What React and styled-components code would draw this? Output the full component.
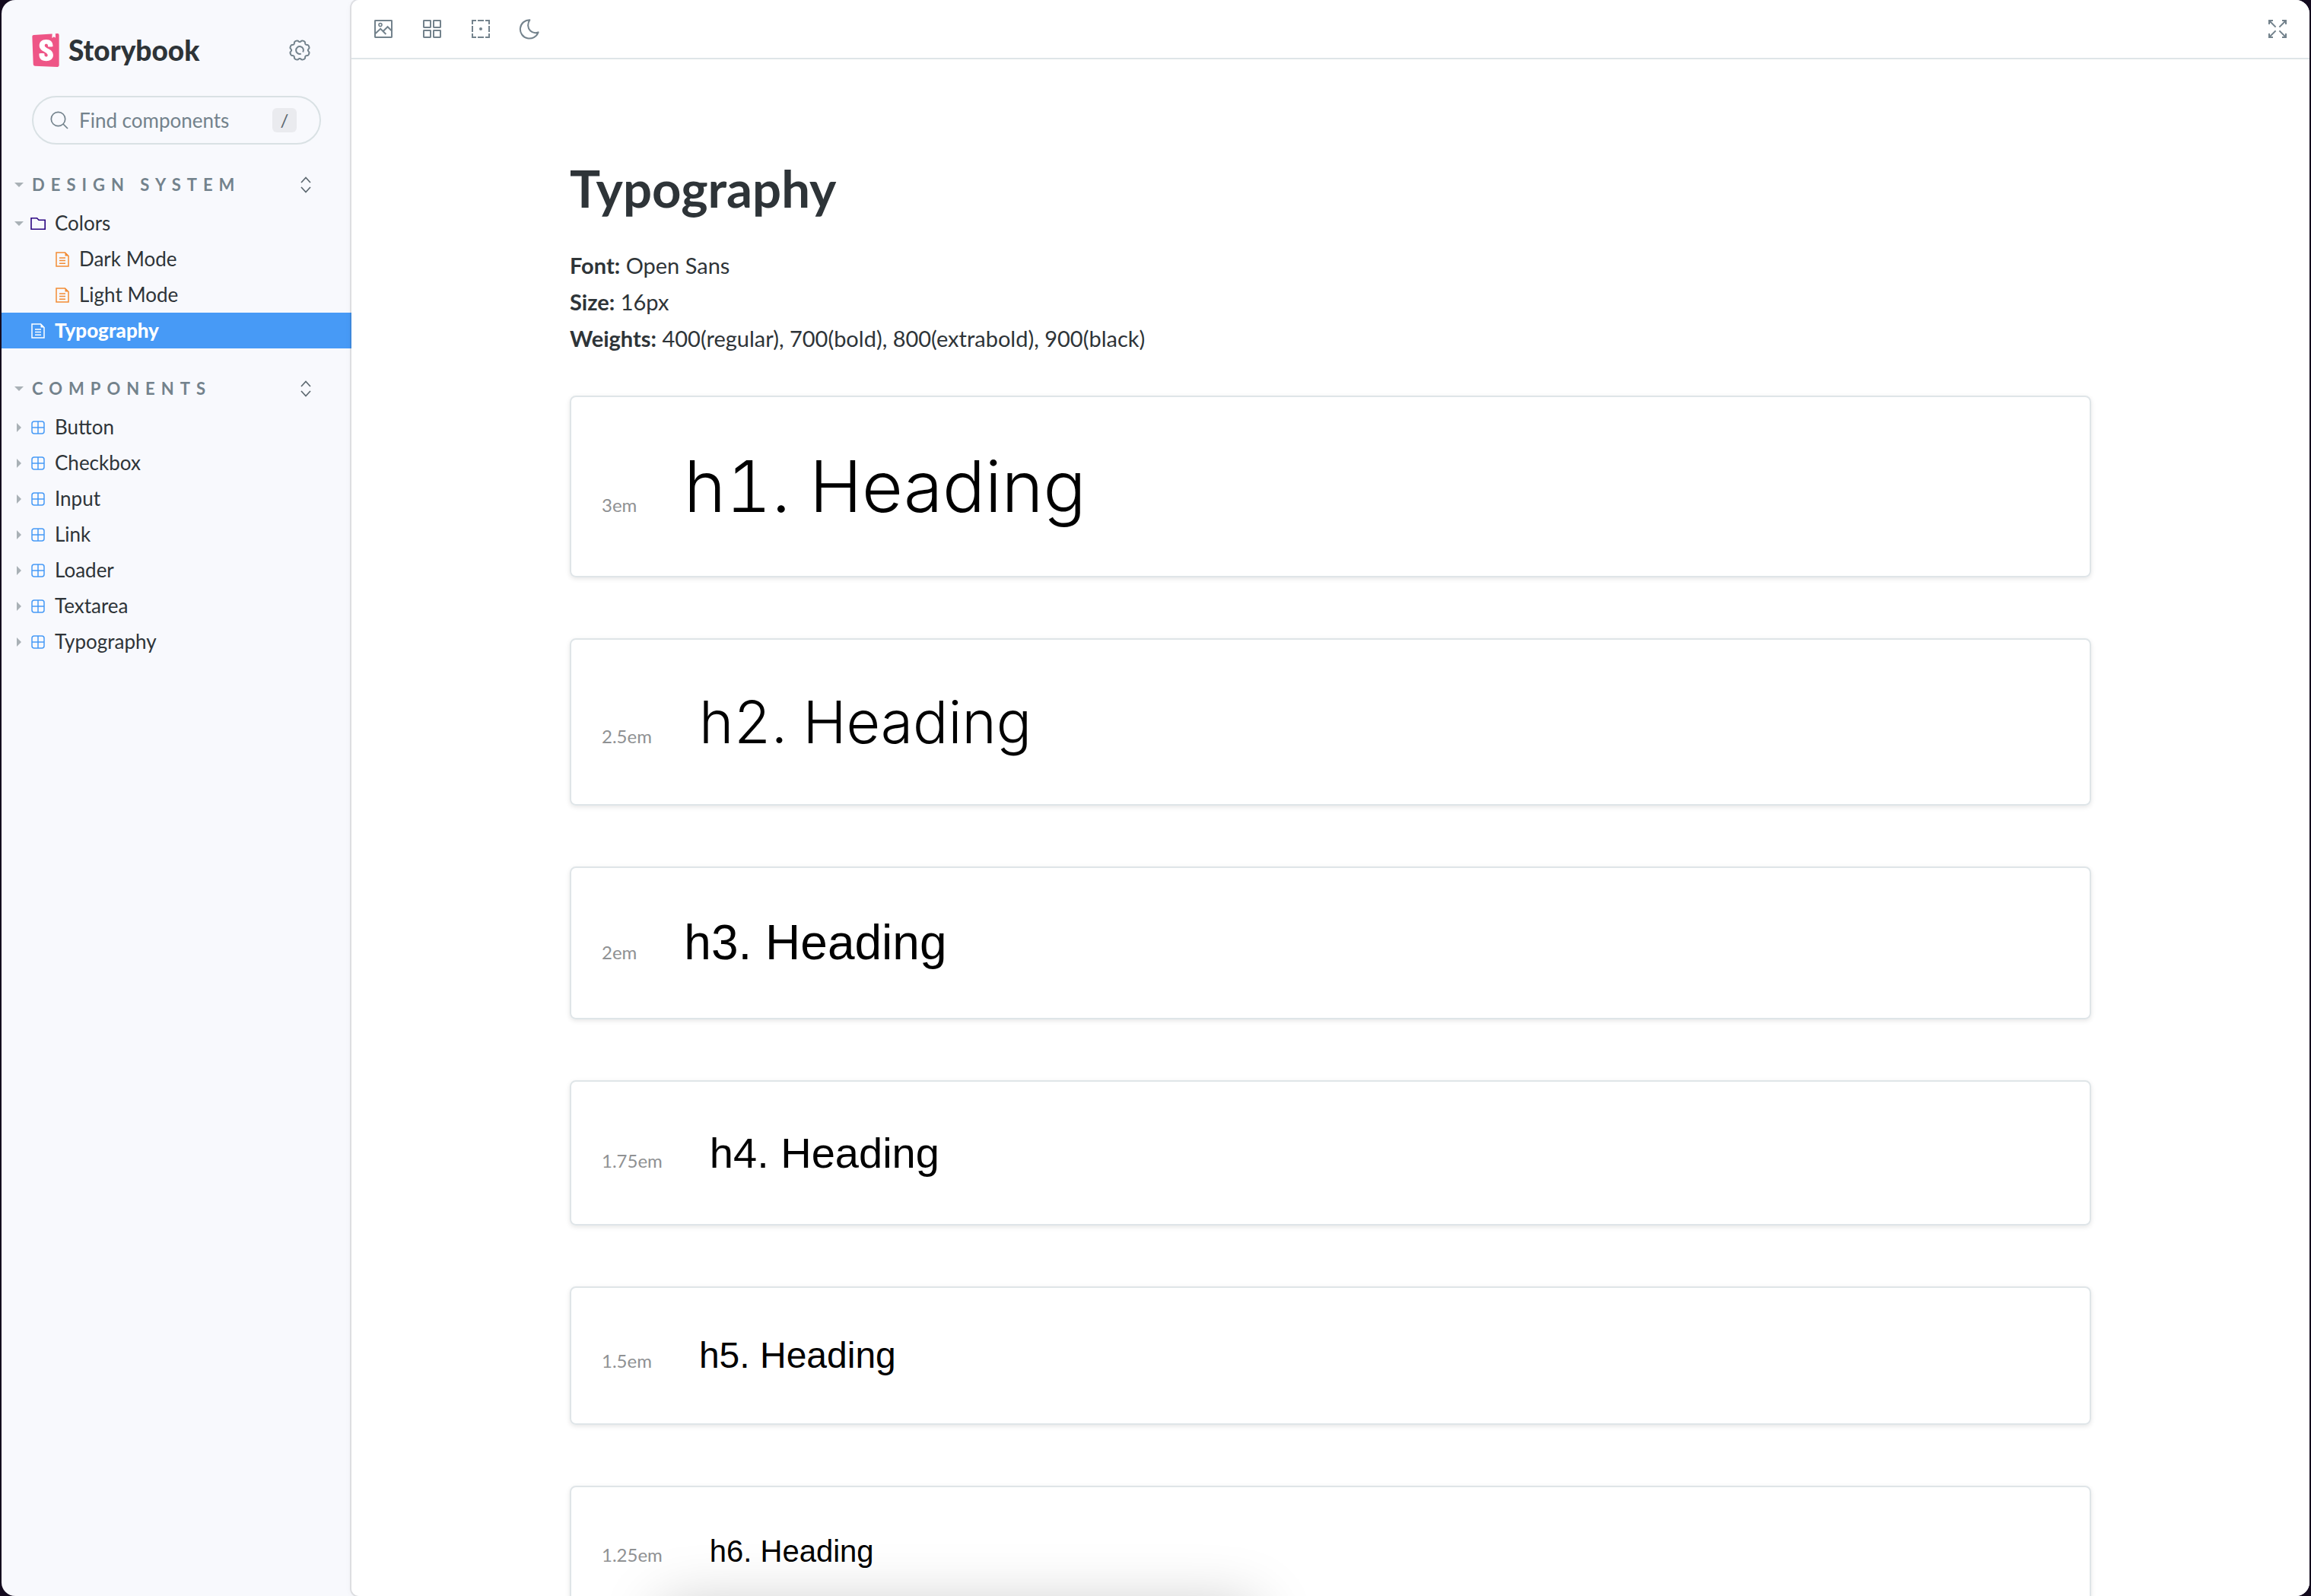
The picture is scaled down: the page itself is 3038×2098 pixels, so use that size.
import React from 'react';
import styled, { createGlobalStyle } from 'styled-components';
import { SiStorybook } from 'react-icons/si';

const color = {
  ink: '#2e3438',
  muted: '#73828c',
  border: '#dfe5e8',
  inputBorder: '#d9e1e4',
  sidebar: '#f8f9fd',
  blue: '#479af6',
  orange: '#f28c35',
  violet: '#2a0481',
  pink: '#ee5586',
};

const GlobalStyle = createGlobalStyle`
  *, *::before, *::after { box-sizing: border-box; }
  body {
    margin: 0;
    background: #130a1e;
    font-family: Lato, "Noto Sans", sans-serif;
    color: ${color.ink};
  }
  button {
    font: inherit;
    color: inherit;
    background: none;
    border: 0;
    padding: 0;
    cursor: pointer;
  }
  svg { display: block; }
`;

const Frame = styled.div`
  height: 100vh;
  padding: 0 2px;
`;

const Shell = styled.div`
  display: grid;
  grid-template-columns: 460px minmax(0, 1fr);
  height: 100%;
  border-radius: 18px;
  overflow: hidden;
  background: ${color.sidebar};
`;

const Sidebar = styled.nav`
  display: flex;
  flex-direction: column;
  gap: 26px;
  padding-top: 40px;
`;

const SidebarTop = styled.div`
  display: flex;
  flex-direction: column;
  gap: 34px;
  padding: 0 40px;
`;

const BrandRow = styled.div`
  display: flex;
  align-items: center;
  justify-content: space-between;
  height: 52px;
  padding-right: 14px;
`;

const Brand = styled.a`
  display: flex;
  align-items: center;
  gap: 12px;
  color: ${color.ink};
  font-size: 37px;
  line-height: 44px;
  font-weight: 900;
  text-decoration: none;
`;

const BrandMark = styled(SiStorybook)`
  width: 36px;
  height: 44px;
  color: ${color.pink};
  background: linear-gradient(#fff, #fff) center / 64% 90% no-repeat;
`;

const IconButton = styled.button`
  display: grid;
  place-items: center;
  width: 28px;
  height: 28px;
  color: ${color.muted};
`;

const SearchBox = styled.label`
  display: flex;
  align-items: center;
  gap: 14px;
  height: 64px;
  padding: 0 30px 0 22px;
  border: 2px solid ${color.inputBorder};
  border-radius: 32px;
  color: ${color.muted};
`;

const SearchInput = styled.input`
  flex: 1;
  min-width: 0;
  padding: 0;
  border: 0;
  outline: 0;
  background: none;
  font-family: inherit;
  font-size: 26px;
  line-height: 32px;
  color: ${color.ink};
  &::placeholder { color: ${color.muted}; opacity: 1; }
`;

const Key = styled.kbd`
  display: grid;
  place-items: center;
  width: 32px;
  height: 32px;
  border-radius: 6px;
  background: #eaebef;
  color: #5c6870;
  font-family: inherit;
  font-size: 24px;
  line-height: 32px;
`;

const SectionHeader = styled.div`
  display: flex;
  align-items: center;
  justify-content: space-between;
  height: 54px;
  padding: 0 46px 0 17px;
`;

const SectionTitle = styled.button`
  display: flex;
  align-items: center;
  gap: 11px;
  color: ${color.muted};
  font-size: 22px;
  line-height: 28px;
  font-weight: 700;
  letter-spacing: 8px;
  text-transform: uppercase;
`;

const TreeList = styled.ul`
  margin: 0;
  padding: 0;
  list-style: none;
`;

const TreeLink = styled.a`
  display: flex;
  align-items: center;
  height: 47px;
  padding-left: ${(p) => 17 + p.$depth * 32}px;
  background: ${(p) => (p.$selected ? color.blue : 'transparent')};
  color: ${(p) => (p.$selected ? '#fff' : color.ink)};
  font-size: 26px;
  line-height: 32px;
  font-weight: ${(p) => (p.$selected ? 900 : 400)};
  text-decoration: none;
`;

const ItemName = styled.span`
  padding-bottom: 2px;
`;

const CaretCell = styled.span`
  display: grid;
  place-items: center;
  width: 12px;
  height: 12px;
`;

const KindCell = styled.span`
  display: grid;
  place-items: center;
  width: 28px;
  margin: 0 8px 0 5px;
  color: ${(p) => p.$tint};
`;

const Main = styled.main`
  position: relative;
  display: flex;
  flex-direction: column;
  min-height: 0;
  overflow: hidden;
  background: #fff;
  border-radius: 10px 0 0 10px;
`;

const MainWrap = styled.div`
  display: grid;
  min-height: 0;
  border-radius: 10px 0 0 10px;
  box-shadow: 0 0 0 2px rgba(0, 0, 0, 0.09), 0 2px 10px rgba(0, 0, 0, 0.06);
`;

const Toolbar = styled.header`
  display: flex;
  flex: none;
  align-items: center;
  justify-content: space-between;
  height: 78px;
  padding: 0 28px;
  border-bottom: 2px solid ${color.border};
`;

const ToolGroup = styled.div`
  display: flex;
  gap: 36px;
`;

const DocsScroll = styled.div`
  flex: 1;
  min-height: 0;
  padding: 129px 40px;
  overflow: hidden;
`;

const Docs = styled.article`
  max-width: 2000px;
  margin: 0 auto;
`;

const Title = styled.h1`
  margin: 0 0 38px;
  font-size: 67px;
  line-height: 80px;
  font-weight: 700;
`;

const Facts = styled.div`
  margin-bottom: 51px;
  font-size: 29px;
  line-height: 48px;
`;

const Fact = styled.p`
  margin: 0;
`;

const Specimens = styled.div`
  display: flex;
  flex-direction: column;
  gap: 80px;
`;

const Specimen = styled.section`
  display: flex;
  align-items: baseline;
  gap: 62px;
  padding: 60px 40px;
  border: 2px solid ${color.border};
  border-radius: 8px;
  box-shadow: 0 2px 6px rgba(0, 0, 0, 0.1);
`;

const SizeLabel = styled.span`
  font-size: 24px;
  line-height: 32px;
  color: #8f9193;
`;

const Sample = styled.div`
  font-family: ${(p) => (p.$light ? 'Inter, sans-serif' : '"Liberation Sans", Arial, sans-serif')};
  font-size: ${(p) => p.$size}px;
  line-height: ${(p) => p.$line}px;
  font-weight: ${(p) => (p.$light ? 300 : 400)};
  font-variant-numeric: tabular-nums;
  color: #000;
  white-space: nowrap;
`;

const DockShade = styled.div`
  position: absolute;
  left: 408px;
  bottom: -112px;
  width: 780px;
  height: 100px;
  box-shadow: 0 0 80px rgba(0, 0, 0, 0.22);
  pointer-events: none;
`;

function Stroke({ children }) {
  return (
    <svg width="28" height="28" viewBox="0 0 14 14" fill="none" stroke="currentColor" aria-hidden="true">
      {children}
    </svg>
  );
}

const gearPath = (() => {
  const steps = 96;
  const pts = [];
  for (let i = 0; i < steps; i += 1) {
    const t = (i / steps) * Math.PI * 2;
    const wave = Math.tanh(1.6 * (0.45 - Math.cos(8 * t)));
    const r = 5.9 + 0.65 * wave;
    pts.push(`${(7 + r * Math.sin(t)).toFixed(2)} ${(7 - r * Math.cos(t)).toFixed(2)}`);
  }
  return `M${pts.join('L')}Z`;
})();

const GearIcon = () => (
  <Stroke>
    <path d={gearPath} strokeLinejoin="round" />
    <path d="M7.9 9.3A2.45 2.45 0 1 1 9.1 8.3" />
  </Stroke>
);

const PhotoIcon = () => (
  <Stroke>
    <rect x="1.5" y="1.5" width="11" height="11" rx="0.2" />
    <circle cx="5" cy="4.3" r="1" strokeWidth="0.8" />
    <path d="M1.5 10.3 5.1 6.9 8.7 10.5M7 8.4 9.8 5.6 12.6 8.4" />
  </Stroke>
);

const GridIcon = () => (
  <Stroke>
    <rect x="1.5" y="1.5" width="4.5" height="4.5" rx="0.2" />
    <rect x="8" y="1.5" width="4.5" height="4.5" rx="0.2" />
    <rect x="1.5" y="8" width="4.5" height="4.5" rx="0.2" />
    <rect x="8" y="8" width="4.5" height="4.5" rx="0.2" />
  </Stroke>
);

const OutlineIcon = () => (
  <Stroke>
    <path d="M1.5 4V1.5H4M5 1.5H9M10 1.5H12.5V4M12.5 5V9M12.5 10V12.5H10M9 12.5H5M4 12.5H1.5V10M1.5 9V5" />
    <circle cx="7" cy="7" r="1" fill="currentColor" stroke="none" />
  </Stroke>
);

const MoonIcon = () => (
  <Stroke>
    <path d="M7.2 1.1C5.6 3.4 5.7 6.5 7.6 8.3C9 9.6 11 9.9 12.8 9.2A6.1 6.1 0 1 1 7.2 1.1Z" strokeLinejoin="round" />
  </Stroke>
);

const FullscreenIcon = () => (
  <Stroke>
    <path d="M1.5 4V1.5H4M1.5 1.5 5.8 5.8M10 1.5H12.5V4M12.5 1.5 8.2 5.8M1.5 10V12.5H4M1.5 12.5 5.8 8.2M10 12.5H12.5V10M12.5 12.5 8.2 8.2" />
  </Stroke>
);

const SearchIcon = () => (
  <svg width="24" height="24" viewBox="0 0 24 24" fill="none" stroke="currentColor" strokeWidth="1.7" aria-hidden="true">
    <circle cx="10.5" cy="10.5" r="9.2" />
    <path d="M17 17 23 23" />
  </svg>
);

const ExpandIcon = () => (
  <svg width="28" height="28" viewBox="0 0 28 28" fill="none" stroke="#5c6870" strokeWidth="1.7" aria-hidden="true">
    <path d="M8 11 14 4.5 20 11M8 17 14 23.5 20 17" />
  </svg>
);

const Caret = ({ open }) => (
  <svg width="12" height="12" viewBox="0 0 12 12" fill="#a9b1b6" aria-hidden="true">
    <path d={open ? 'M0 3H12L6 9Z' : 'M3 0V12L9 6Z'} />
  </svg>
);

const FolderIcon = () => (
  <svg width="20" height="20" viewBox="0 0 20 20" fill="none" stroke="currentColor" strokeWidth="1.6" aria-hidden="true">
    <path d="M1 2.8H8.6L11 5.2H19.2V17.2H1Z" />
  </svg>
);

const DocIcon = () => (
  <svg width="18" height="20" viewBox="0 0 18 20" fill="none" stroke="currentColor" strokeWidth="1.5" aria-hidden="true">
    <path d="M1 1H12.5L17 5.5V19H1Z" />
    <path d="M12.5 0.5V5.5H17.5Z" fill="currentColor" stroke="none" />
    <path d="M5 8H13M5 11.5H13M5 15.3H13" />
  </svg>
);

const ComponentIcon = () => (
  <svg width="18" height="18" viewBox="0 0 18 18" fill="none" stroke="currentColor" strokeWidth="1.5" aria-hidden="true">
    <rect x="1" y="1" width="16" height="16" rx="3" />
    <path d="M9 1V17M1 9H17" />
  </svg>
);

const kinds = {
  group: { Icon: FolderIcon, tint: color.violet },
  doc: { Icon: DocIcon, tint: color.orange },
  component: { Icon: ComponentIcon, tint: color.blue },
};

const sections = [
  {
    title: 'Design System',
    items: [
      { name: 'Colors', kind: 'group', caret: 'open' },
      { name: 'Dark Mode', kind: 'doc', depth: 1 },
      { name: 'Light Mode', kind: 'doc', depth: 1 },
      { name: 'Typography', kind: 'doc', selected: true },
    ],
  },
  {
    title: 'Components',
    items: ['Button', 'Checkbox', 'Input', 'Link', 'Loader', 'Textarea', 'Typography'].map((name) => ({
      name,
      kind: 'component',
      caret: 'closed',
    })),
  },
];

const facts = [
  ['Font:', 'Open Sans'],
  ['Size:', '16px'],
  ['Weights:', '400(regular), 700(bold), 800(extrabold), 900(black)'],
];

const specimens = [
  { label: '3em', text: 'h1. Heading', size: 93, line: 115, light: true },
  { label: '2.5em', text: 'h2. Heading', size: 77, line: 96, light: true },
  { label: '2em', text: 'h3. Heading', size: 64, line: 77 },
  { label: '1.75em', text: 'h4. Heading', size: 56, line: 67 },
  { label: '1.5em', text: 'h5. Heading', size: 48, line: 58 },
  { label: '1.25em', text: 'h6. Heading', size: 40, line: 48 },
];

const tools = [
  ['Change background', PhotoIcon],
  ['Apply grid', GridIcon],
  ['Apply outline', OutlineIcon],
  ['Toggle dark mode', MoonIcon],
];

function TreeItem({ item }) {
  const { Icon, tint } = kinds[item.kind];
  return (
    <li>
      <TreeLink
        href="#"
        $depth={item.depth || 0}
        $selected={item.selected}
        aria-current={item.selected ? 'page' : undefined}
      >
        <CaretCell>{item.caret && <Caret open={item.caret === 'open'} />}</CaretCell>
        <KindCell $tint={item.selected ? '#fff' : tint}>
          <Icon />
        </KindCell>
        <ItemName>{item.name}</ItemName>
      </TreeLink>
    </li>
  );
}

function Section({ section }) {
  return (
    <section>
      <SectionHeader>
        <SectionTitle type="button" aria-expanded="true">
          <Caret open />
          {section.title}
        </SectionTitle>
        <IconButton type="button" aria-label={`Expand ${section.title}`}>
          <ExpandIcon />
        </IconButton>
      </SectionHeader>
      <TreeList>
        {section.items.map((item) => (
          <TreeItem key={item.name} item={item} />
        ))}
      </TreeList>
    </section>
  );
}

export default function App() {
  return (
    <Frame>
      <GlobalStyle />
      <Shell>
        <Sidebar aria-label="Stories">
          <SidebarTop>
            <BrandRow>
              <Brand href="#">
                <BrandMark viewBox="2.3 0 19.4 24" aria-hidden="true" />
                Storybook
              </Brand>
              <IconButton type="button" aria-label="Settings">
                <GearIcon />
              </IconButton>
            </BrandRow>
            <SearchBox>
              <SearchIcon />
              <SearchInput type="text" placeholder="Find components" aria-label="Find components" />
              <Key>/</Key>
            </SearchBox>
          </SidebarTop>
          {sections.map((section) => (
            <Section key={section.title} section={section} />
          ))}
        </Sidebar>
        <MainWrap>
          <Main>
            <Toolbar>
              <ToolGroup>
                {tools.map(([label, Icon]) => (
                  <IconButton key={label} type="button" aria-label={label}>
                    <Icon />
                  </IconButton>
                ))}
              </ToolGroup>
              <IconButton type="button" aria-label="Go full screen">
                <FullscreenIcon />
              </IconButton>
            </Toolbar>
            <DocsScroll>
              <Docs>
                <Title>Typography</Title>
                <Facts>
                  {facts.map(([term, value]) => (
                    <Fact key={term}>
                      <strong>{term}</strong> {value}
                    </Fact>
                  ))}
                </Facts>
                <Specimens>
                  {specimens.map((s) => (
                    <Specimen key={s.label}>
                      <SizeLabel>{s.label}</SizeLabel>
                      <Sample $size={s.size} $line={s.line} $light={s.light}>
                        {s.text}
                      </Sample>
                    </Specimen>
                  ))}
                </Specimens>
              </Docs>
            </DocsScroll>
            <DockShade />
          </Main>
        </MainWrap>
      </Shell>
    </Frame>
  );
}
